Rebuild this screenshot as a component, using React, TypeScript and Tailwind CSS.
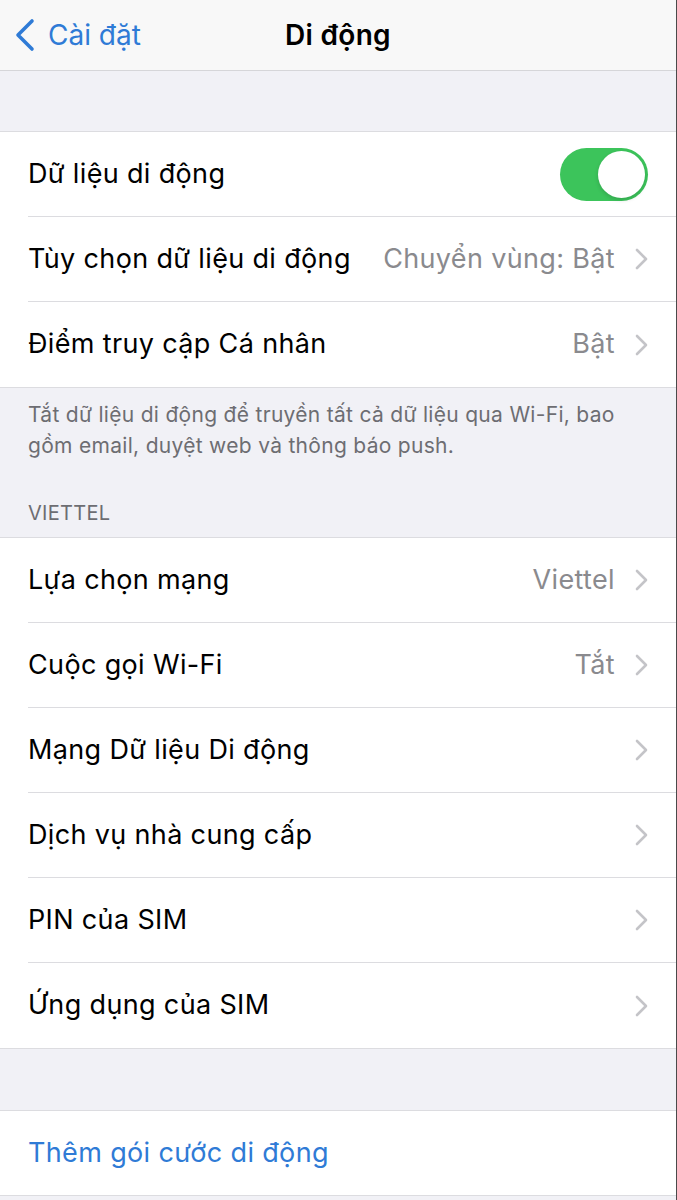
import React from 'react';

const font = { fontFamily: 'Inter, "Noto Sans", sans-serif' };

function Chevron() {
  return (
    <svg width="13" height="22" viewBox="0 0 13 22" className="ml-[20px] shrink-0">
      <path d="M2 2l9 9-9 9" fill="none" stroke="#c4c4c8" strokeWidth="2.6" strokeLinecap="round" strokeLinejoin="round" />
    </svg>
  );
}

function Toggle() {
  return (
    <div className="w-[88px] h-[53px] rounded-full bg-[#3cc45b] p-[3px] flex justify-end">
      <div className="w-[47px] h-[47px] rounded-full bg-white shadow-[0_2px_4px_rgba(0,0,0,0.15)]" />
    </div>
  );
}

type Row = { label: string; value?: string; chevron?: boolean; toggle?: boolean };

function Group({ rows }: { rows: Row[] }) {
  return (
    <div className="bg-white border-y border-[#dcdce0]">
      {rows.map((r, i) => (
        <div key={i} className="pl-[28px] h-[85px] flex">
          <div
            className={
              'flex-1 flex items-center pr-[28px] ' +
              (i < rows.length - 1 ? 'border-b border-[#dcdce0]' : '')
            }
          >
            <span className="text-[27px] text-black tracking-[0.35px]">{r.label}</span>
            <div className="flex-1" />
            {r.value && <span className="text-[27px] text-[#8a8a8e] tracking-[0.35px]">{r.value}</span>}
            {r.chevron && <Chevron />}
            {r.toggle && <Toggle />}
          </div>
        </div>
      ))}
    </div>
  );
}

export default function App() {
  return (
    <div className="w-[677px] min-h-[1200px] bg-[#f1f1f6] border-r border-[#4a4a4a]" style={font}>
      <div className="h-[71px] bg-[#f8f8f8] border-b border-[#d6d6d9] grid grid-cols-[1fr_auto_1fr] items-center">
        <div className="flex items-center pl-[14px] text-[#2f7bd6]">
          <svg width="22" height="34" viewBox="0 0 22 34">
            <path d="M18 3L4 17l14 14" fill="none" stroke="#2f7bd6" strokeWidth="3.6" strokeLinecap="round" strokeLinejoin="round" />
          </svg>
          <span className="ml-[12px] text-[28px] tracking-[0px]">Cài đặt</span>
        </div>
        <div className="text-[28px] font-semibold text-black tracking-[0.3px]">Di động</div>
        <div />
      </div>

      <div className="h-[60px]" />

      <Group
        rows={[
          { label: 'Dữ liệu di động', toggle: true },
          { label: 'Tùy chọn dữ liệu di động', value: 'Chuyển vùng: Bật', chevron: true },
          { label: 'Điểm truy cập Cá nhân', value: 'Bật', chevron: true },
        ]}
      />

      <div className="px-[28px] pt-[11px] text-[21px] leading-[31px] text-[#6d6d72] tracking-[0.3px]">
        Tắt dữ liệu di động để truyền tất cả dữ liệu qua Wi-Fi, bao gồm email, duyệt web và thông báo push.
      </div>
      <div className="px-[28px] pt-[38px] pb-[10px] text-[20px] leading-[28px] text-[#6d6d72] tracking-[0.3px]">VIETTEL</div>

      <Group
        rows={[
          { label: 'Lựa chọn mạng', value: 'Viettel', chevron: true },
          { label: 'Cuộc gọi Wi-Fi', value: 'Tắt', chevron: true },
          { label: 'Mạng Dữ liệu Di động', chevron: true },
          { label: 'Dịch vụ nhà cung cấp', chevron: true },
          { label: 'PIN của SIM', chevron: true },
          { label: 'Ứng dụng của SIM', chevron: true },
        ]}
      />

      <div className="h-[61px]" />

      <div className="bg-white border-y border-[#dcdce0] h-[86px] flex items-center pl-[28px]">
        <span className="text-[27px] text-[#2f7bd6] tracking-[0.35px]">Thêm gói cước di động</span>
      </div>
    </div>
  );
}
